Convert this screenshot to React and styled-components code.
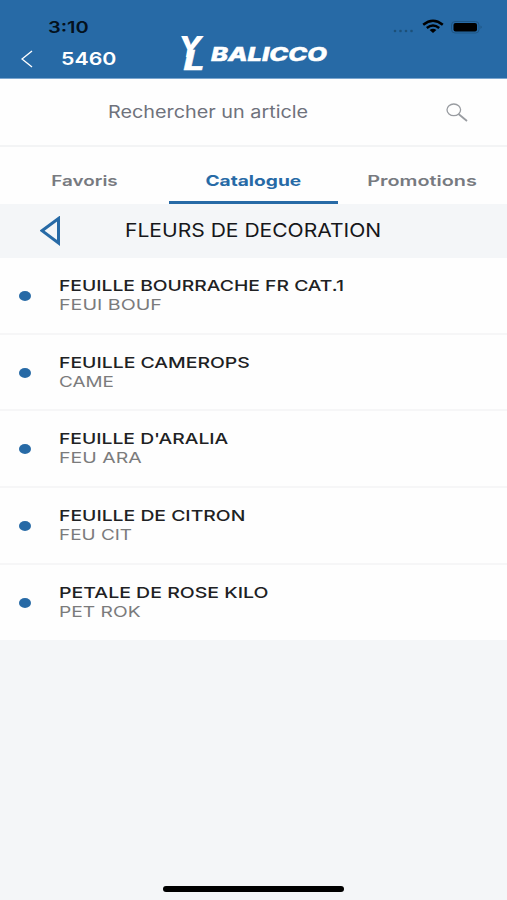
import React from "react";
import styled, { createGlobalStyle } from "styled-components";

const articles = [
  { name: "FEUILLE BOURRACHE FR CAT.1", code: "FEUI BOUF", nameWide: 1.286, codeWide: 1.31 },
  { name: "FEUILLE CAMEROPS", code: "CAME", nameWide: 1.292, codeWide: 1.26 },
  { name: "FEUILLE D'ARALIA", code: "FEU ARA", nameWide: 1.286, codeWide: 1.3 },
  { name: "FEUILLE DE CITRON", code: "FEU CIT", nameWide: 1.29, codeWide: 1.26 },
  { name: "PETALE DE ROSE KILO", code: "PET ROK", nameWide: 1.3, codeWide: 1.28 },
];

const Logo = () => (
  <LogoSvg width="154" height="46" viewBox="-4 -6 154 46">
    <g fill="#fff" stroke="#fff" fontFamily="Inter, sans-serif" fontStyle="italic" fontWeight="800">
      <text x="-2" y="24" fontSize="28" textLength="24" lengthAdjust="spacingAndGlyphs" strokeWidth="0">Y</text>
      <text x="3.5" y="37" fontSize="27" textLength="21" lengthAdjust="spacingAndGlyphs" strokeWidth="0.4">L</text>
      <text x="31" y="27.6" fontSize="18.8" textLength="116" lengthAdjust="spacingAndGlyphs" strokeWidth="0.5">BALICCO</text>
    </g>
  </LogoSvg>
);

const StatusIcons = () => (
  <svg width="94" height="20" viewBox="0 0 94 20">
    <g fill="#1c5078">
      <circle cx="6" cy="14" r="1.3" />
      <circle cx="11.5" cy="14" r="1.3" />
      <circle cx="17" cy="14" r="1.3" />
      <circle cx="22.5" cy="14" r="1.3" />
    </g>
    <g fill="none" stroke="#000" strokeWidth="2.5">
      <path d="M34.2 7.8 Q44 -0.2 53.8 7.8" />
      <path d="M37.8 11 Q44 6 50.2 11" />
    </g>
    <path d="M40.6 13 Q44 10.6 47.4 13 L44 16 Z" />
    <rect x="62.5" y="4.5" width="27.5" height="11.5" rx="3.5" fill="none" stroke="#1f5685" />
    <rect x="64.5" y="6" width="23.5" height="8.5" rx="2" />
    <path d="M91.5 8.5 Q94 10.2 91.5 12 Z" fill="#1f5685" />
  </svg>
);

const App = () => {
  return (
    <>
      <GlobalStyle />
      <Screen>
        <Header>
          <StatusBar>
            <Text size={16} weight={600} wide={1.25} color="#04111d">3:10</Text>
            <StatusIcons />
          </StatusBar>
          <NavBar>
            <BackIcon width="12" height="18" viewBox="0 0 12 18">
              <path d="M11 1 L1 9 L11 17" fill="none" stroke="#fff" strokeWidth="1.4" />
            </BackIcon>
            <Text size={17.5} weight={600} wide={1.22} color="#fff">5460</Text>
            <Logo />
          </NavBar>
        </Header>
        <Search>
          <Text size={17} wide={1.165} color="#6f727c">Rechercher un article</Text>
          <svg width="22" height="19" viewBox="0 0 22 19" fill="none" stroke="#999ca1">
            <ellipse cx="7.8" cy="6.8" rx="6.8" ry="5.8" strokeWidth="1.3" />
            <path d="M12.5 11 L21 18" strokeWidth="1.8" />
          </svg>
        </Search>
        <Tabs>
          <Tab><Text center size={14.5} weight={600} wide={1.3} color="#777a80">Favoris</Text></Tab>
          <Tab active><Text center size={14.5} weight={700} wide={1.32} color="#276aa6">Catalogue</Text></Tab>
          <Tab><Text center size={14.5} weight={600} wide={1.37} color="#777a80">Promotions</Text></Tab>
        </Tabs>
        <Category>
          <svg width="21" height="30" viewBox="0 0 21 30">
            <path d="M18.5 2.5 V27 L2 14.7 Z" fill="none" stroke="#276aa6" strokeWidth="3" />
          </svg>
          <Text size={19} wide={1.108} color="#16171a">FLEURS DE DECORATION</Text>
        </Category>
        <List>
          {articles.map((article) => (
            <Row key={article.code}>
              <Dot />
              <Labels>
                <Text size={15} weight={500} wide={article.nameWide} color="#202123">{article.name}</Text>
                <Text size={15} wide={article.codeWide} color="#7b7b7c">{article.code}</Text>
              </Labels>
            </Row>
          ))}
        </List>
        <Footer>
          <HomeIndicator />
        </Footer>
      </Screen>
    </>
  );
};

const GlobalStyle = createGlobalStyle`
  body {
    margin: 0;
    background: #f4f6f8;
  }
  * {
    box-sizing: border-box;
  }
`;

const Text = styled.span.withConfig({
  shouldForwardProp: (prop) => !["size", "weight", "wide", "center", "color"].includes(prop),
})`
  display: block;
  width: max-content;
  font-family: Inter, sans-serif;
  font-size: ${(p) => p.size}px;
  font-weight: ${(p) => p.weight || 400};
  line-height: 19px;
  color: ${(p) => p.color};
  white-space: nowrap;
  transform: scaleX(${(p) => p.wide});
  transform-origin: ${(p) => (p.center ? "center" : "left")};
`;

const Screen = styled.div`
  display: flex;
  flex-direction: column;
  width: 507px;
  height: 900px;
  overflow: hidden;
  background: #f4f6f8;
`;

const Header = styled.header`
  height: 79px;
  background: #276aa6;
  border-bottom: 1px solid #7ba6cf;
`;

const StatusBar = styled.div`
  display: flex;
  justify-content: space-between;
  height: 34px;
  padding: 18px 18px 0 48px;
  margin-right: 6px;
  & > svg {
    margin-top: -1px;
  }
`;

const NavBar = styled.div`
  display: flex;
  align-items: flex-start;
  height: 44px;
  padding: 15px 0 0 21px;
  & > span {
    width: 119px;
    margin-left: 28px;
  }
`;

const BackIcon = styled.svg`
  margin-top: 1px;
`;

const LogoSvg = styled.svg`
  margin: -22px 0 0 -4px;
  overflow: visible;
`;

const Search = styled.div`
  display: flex;
  align-items: center;
  justify-content: space-between;
  height: 68px;
  padding: 1px 39px 0 108px;
  background: #fefefe;
  border-bottom: 2px solid #f3f4f5;
`;

const Tabs = styled.nav`
  display: grid;
  grid-template-columns: repeat(3, 1fr);
  height: 57px;
  background: #fefefe;
`;

const Tab = styled.div.withConfig({ shouldForwardProp: (prop) => prop !== "active" })`
  display: flex;
  justify-content: center;
  padding-top: 24px;
  border-bottom: 3px solid ${(p) => (p.active ? "#276aa6" : "transparent")};
`;

const Category = styled.div`
  display: flex;
  align-items: center;
  gap: 64px;
  height: 54px;
  padding: 0 0 1px 40px;
`;

const List = styled.div`
  display: flex;
  flex-direction: column;
`;

const Row = styled.div`
  display: flex;
  height: 76.7px;
  padding-left: 19px;
  background: #fefefe;
  border-bottom: 2px solid #f6f6f7;
  &:last-child {
    height: 75.7px;
    border-bottom: none;
  }
`;

const Dot = styled.div`
  width: 12px;
  height: 10px;
  margin-top: 33px;
  border-radius: 50%;
  background: #276aa6;
`;

const Labels = styled.div`
  margin: 18px 0 0 28px;
`;

const Footer = styled.footer`
  display: flex;
  flex: 1;
  align-items: flex-end;
  justify-content: center;
  padding-bottom: 8px;
`;

const HomeIndicator = styled.div`
  width: 181px;
  height: 6px;
  border-radius: 3px;
  background: #000;
`;

export default App;
